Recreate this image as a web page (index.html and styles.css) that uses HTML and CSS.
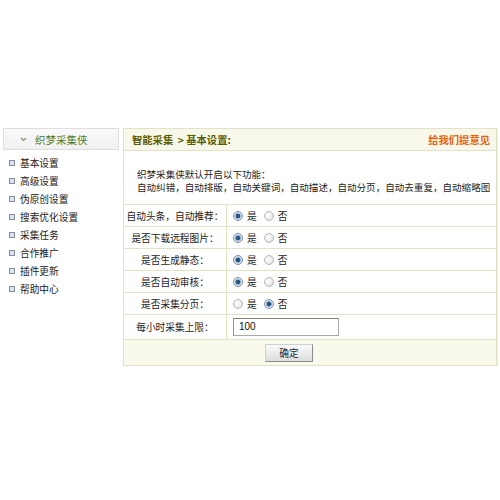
FILE: index.html
```html
<!DOCTYPE html>
<html>
<head>
<meta charset="utf-8">
<link rel="stylesheet" href="styles.css">
</head>
<body>
<div class="page">
  <div class="side">
    <div class="side-head">
      <svg class="chev" width="7" height="5" viewBox="0 0 7 5"><path d="M1 1 L3.5 3.5 L6 1" fill="none" stroke="#7a9a5a" stroke-width="1.2"/></svg>
      <span>织梦采集侠</span>
    </div>
    <ul class="menu">
      <li><i class="dot"></i>基本设置</li>
      <li><i class="dot"></i>高级设置</li>
      <li><i class="dot"></i>伪原创设置</li>
      <li><i class="dot"></i>搜索优化设置</li>
      <li><i class="dot"></i>采集任务</li>
      <li><i class="dot"></i>合作推广</li>
      <li><i class="dot"></i>插件更新</li>
      <li><i class="dot"></i>帮助中心</li>
    </ul>
  </div>
  <div class="main">
    <div class="main-head">
      <span class="title">智能采集&nbsp;&nbsp;&gt;&nbsp;基本设置:</span>
      <span class="feedback">给我们提意见</span>
    </div>
    <div class="intro">
      <div>织梦采集侠默认开启以下功能：</div>
      <div>自动纠错，自动排版，自动关键词，自动描述，自动分页，自动去重复，自动缩略图</div>
    </div>
    <div class="row">
      <div class="lab">自动头条，自动推荐：</div>
      <div class="val"><span class="radio on"></span><span class="rt">是</span><span class="radio"></span><span class="rt">否</span></div>
    </div>
    <div class="row">
      <div class="lab">是否下载远程图片：</div>
      <div class="val"><span class="radio on"></span><span class="rt">是</span><span class="radio"></span><span class="rt">否</span></div>
    </div>
    <div class="row">
      <div class="lab">是否生成静态：</div>
      <div class="val"><span class="radio on"></span><span class="rt">是</span><span class="radio"></span><span class="rt">否</span></div>
    </div>
    <div class="row">
      <div class="lab">是否自动审核：</div>
      <div class="val"><span class="radio on"></span><span class="rt">是</span><span class="radio"></span><span class="rt">否</span></div>
    </div>
    <div class="row">
      <div class="lab">是否采集分页：</div>
      <div class="val"><span class="radio"></span><span class="rt">是</span><span class="radio on"></span><span class="rt">否</span></div>
    </div>
    <div class="row tall">
      <div class="lab">每小时采集上限：</div>
      <div class="val"><div class="input">100</div></div>
    </div>
    <div class="btn-row">
      <div class="btn">确定</div>
    </div>
  </div>
</div>
</body>
</html>
```

FILE: styles.css
```css
html, body {
  margin: 0;
  padding: 0;
  background: #fff;
}
body {
  font-family: "Noto Sans CJK SC", "Noto Sans", sans-serif;
  font-size: 9.7px;
  color: #222;
}
.page {
  display: flex;
  align-items: flex-start;
  padding: 128px 0 0 3px;
  gap: 4px;
}
.side {
  width: 116px;
}
.side-head {
  height: 20px;
  border: 1px solid #dedede;
  background: linear-gradient(#fafafa, #f0f0f0);
  display: flex;
  align-items: center;
  padding-left: 16px;
  gap: 8px;
  font-size: 10.5px;
  color: #4e7a1e;
}
.chev {
  display: block;
}
.menu {
  list-style: none;
  margin: 4px 0 0 0;
  padding: 0;
}
.menu li {
  height: 18px;
  line-height: 18px;
  display: flex;
  align-items: center;
  gap: 5px;
  padding-left: 6px;
  color: #222;
}
.dot {
  width: 4px;
  height: 4px;
  border: 1px solid #7f8fa8;
  background: #dfe4ee;
  display: block;
}
.main {
  width: 372px;
  border: 1px solid #e2e2c6;
  box-shadow: 1px 1px 1px #eeeee4;
}
.main-head {
  height: 21px;
  border-bottom: 1px solid #e2e2c6;
  background: #f7f8ea;
  display: flex;
  align-items: center;
  justify-content: space-between;
  padding: 0 6px 0 8px;
  font-weight: bold;
  font-size: 10.3px;
}
.title {
  color: #5d5d00;
}
.feedback {
  color: #e8620c;
}
.intro {
  border-bottom: 1px solid #e2e2c6;
  box-sizing: border-box;
  height: 54px;
  padding: 17px 0 0 13px;
  line-height: 13px;
  font-size: 9.55px;
  white-space: nowrap;
  overflow: hidden;
}
.row {
  display: flex;
  height: 22px;
  box-sizing: border-box;
  border-bottom: 1px solid #e2e2c6;
}
.row.tall {
  height: 25px;
}
.lab {
  width: 102px;
  border-right: 1px solid #e2e2c6;
  display: flex;
  align-items: center;
  justify-content: center;
}
.val {
  flex: 1;
  display: flex;
  align-items: center;
  padding-left: 6px;
}
.radio {
  width: 8px;
  height: 8px;
  border-radius: 50%;
  border: 1px solid #b8b8b8;
  background: radial-gradient(circle at 40% 40%, #fff, #dcdcdc);
  box-sizing: content-box;
}
.radio.on {
  border-color: #7c8ea6;
  background: radial-gradient(circle, #1c4a78 0, #2d5f8e 2px, #cfdbe8 3px, #f4f6f9 5px);
}
.rt {
  margin: 0 7px 0 4px;
}
.input {
  width: 106px;
  height: 18px;
  box-sizing: border-box;
  border: 1px solid #a9a9a9;
  border-top-color: #7f7f7f;
  border-left-color: #8f8f8f;
  background: #fff;
  padding-left: 5px;
  line-height: 16px;
  font-family: "Liberation Sans", sans-serif;
  font-size: 10px;
  color: #111;
}
.btn-row {
  height: 25px;
  background: #f9faec;
  display: flex;
  align-items: center;
  padding-left: 141px;
}
.btn {
  width: 46px;
  height: 16px;
  border: 1px solid #8c8c8c;
  border-top-color: #cfcfcf;
  border-left-color: #cfcfcf;
  background: linear-gradient(#fbfbfb, #dcdcdc);
  display: flex;
  align-items: center;
  justify-content: center;
  color: #222;
}
```
